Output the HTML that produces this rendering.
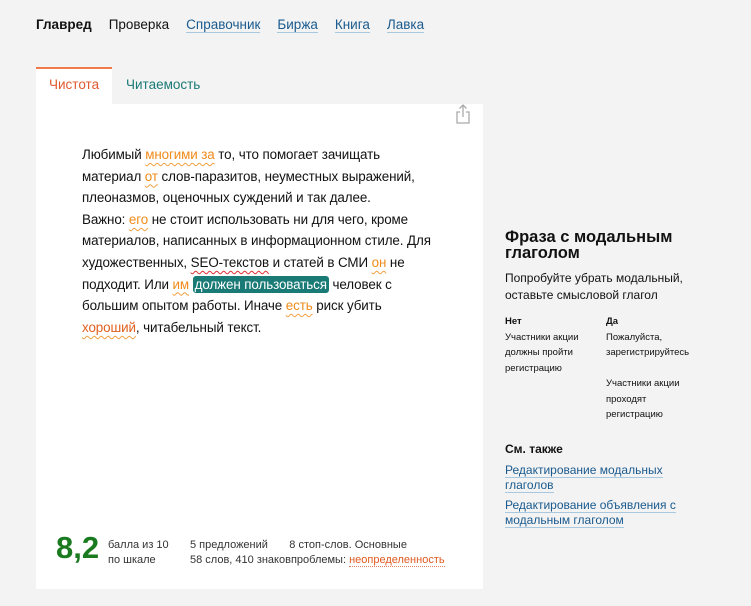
<!DOCTYPE html>
<html><head><meta charset="utf-8"><style>
body{margin:0;width:751px;height:606px;background:#f3f3f3;font-family:"Liberation Sans","Noto Sans CJK SC",sans-serif;color:#111;position:relative;overflow:hidden}
.a{position:absolute;white-space:nowrap}
.nav{top:17px;left:36px;font-size:13.5px}
.nav span{margin-right:17px}
.nav .l{color:#1a5a8e;border-bottom:1px solid #a8c8e0}
.tab{top:67px;left:36px;width:76px;height:38px;background:#fff;border-top:2px solid #f07a4a;box-sizing:border-box}
.panel{top:104px;left:36px;width:447px;height:485px;background:#fff}
.txt{top:144px;left:82px;font-size:13.4px;letter-spacing:-0.1px;line-height:21.6px}
.r{color:#111;text-decoration:underline wavy #e03030;text-decoration-thickness:1px}
.or{color:#e06020;text-decoration:underline wavy #f0a040;text-decoration-thickness:1px}
.ow{color:#f08a1a;text-decoration:underline wavy #f0a040;text-decoration-thickness:1px;text-underline-offset:3px}
.hl{background:#1a7a76;color:#fff;border-radius:3px;padding:1px 2px}
.lnk{color:#1a5a8e;border-bottom:1px solid #a8c8e0}
</style></head><body>
<div class="a nav"><span style="font-weight:bold">Главред</span><span>Проверка</span><span class="l">Справочник</span><span class="l">Биржа</span><span class="l">Книга</span><span class="l">Лавка</span></div>
<div class="a tab"></div>
<div class="a" style="top:77px;left:49px;font-size:13.5px;color:#e05a30">Чистота</div>
<div class="a" style="top:77px;left:126px;font-size:13.5px;color:#1a7a76">Читаемость</div>
<div class="a panel"></div>
<svg class="a" style="top:104px;left:455px" width="16" height="20" viewBox="0 0 16 20"><path d="M8 1v12M4.5 4.5L8 1l3.5 3.5M5 8H2v11h12V8h-3" fill="none" stroke="#aaa" stroke-width="1.3"/></svg>
<div class="a txt">Любимый <span class="ow">многими за</span> то, что помогает зачищать<br>материал <span class="ow">от</span> слов-паразитов, неуместных выражений,<br>плеоназмов, оценочных суждений и так далее.<br>Важно: <span class="ow">его</span> не стоит использовать ни для чего, кроме<br>материалов, написанных в информационном стиле. Для<br>художественных, <span class="r" style="text-underline-offset:3px">SEO-текстов</span> и статей в СМИ <span class="ow">он</span> не<br>подходит. Или <span class="ow">им</span> <span class="hl">должен пользоваться</span> человек с<br>большим опытом работы. Иначе <span class="ow">есть</span> риск убить<br><span class="or" style="text-underline-offset:3px">хороший</span>, читабельный текст.</div>
<div class="a" style="top:530px;left:56px;font-size:31px;font-weight:bold;color:#1a7a20">8,2</div>
<div class="a" style="top:538px;left:108px;font-size:11px;line-height:15px;color:#333">балла из 10<br>по шкале</div>
<div class="a" style="top:538px;left:190px;font-size:11px;line-height:15px;color:#333">5 предложений &nbsp; &nbsp; &nbsp; 8 стоп-слов. Основные<br>58 слов, 410 знаковпроблемы: <span style="color:#e05a20;border-bottom:1px dotted #e08060">неопределенность</span></div>
<div class="a" style="top:229px;left:505px;font-size:16.5px;font-weight:bold;line-height:16px">Фраза с модальным<br>глаголом</div>
<div class="a" style="top:270px;left:505px;font-size:12px;line-height:17px">Попробуйте убрать модальный,<br>оставьте смысловой глагол</div>
<div class="a" style="top:314px;left:505px;font-size:9.5px;line-height:15.5px"><b>Нет</b><br>Участники акции<br>должны пройти<br>регистрацию</div>
<div class="a" style="top:314px;left:606px;font-size:9.5px;line-height:15.5px"><b>Да</b><br>Пожалуйста,<br>зарегистрируйтесь<br><br>Участники акции<br>проходят<br>регистрацию</div>
<div class="a" style="top:442px;left:505px;font-size:12px;font-weight:bold">См. также</div>
<div class="a" style="top:463px;left:505px;font-size:12px;line-height:15px"><span class="lnk">Редактирование модальных</span><br><span class="lnk">глаголов</span></div>
<div class="a" style="top:498px;left:505px;font-size:12px;line-height:15px"><span class="lnk">Редактирование объявления с</span><br><span class="lnk">модальным глаголом</span></div>
</body></html>
